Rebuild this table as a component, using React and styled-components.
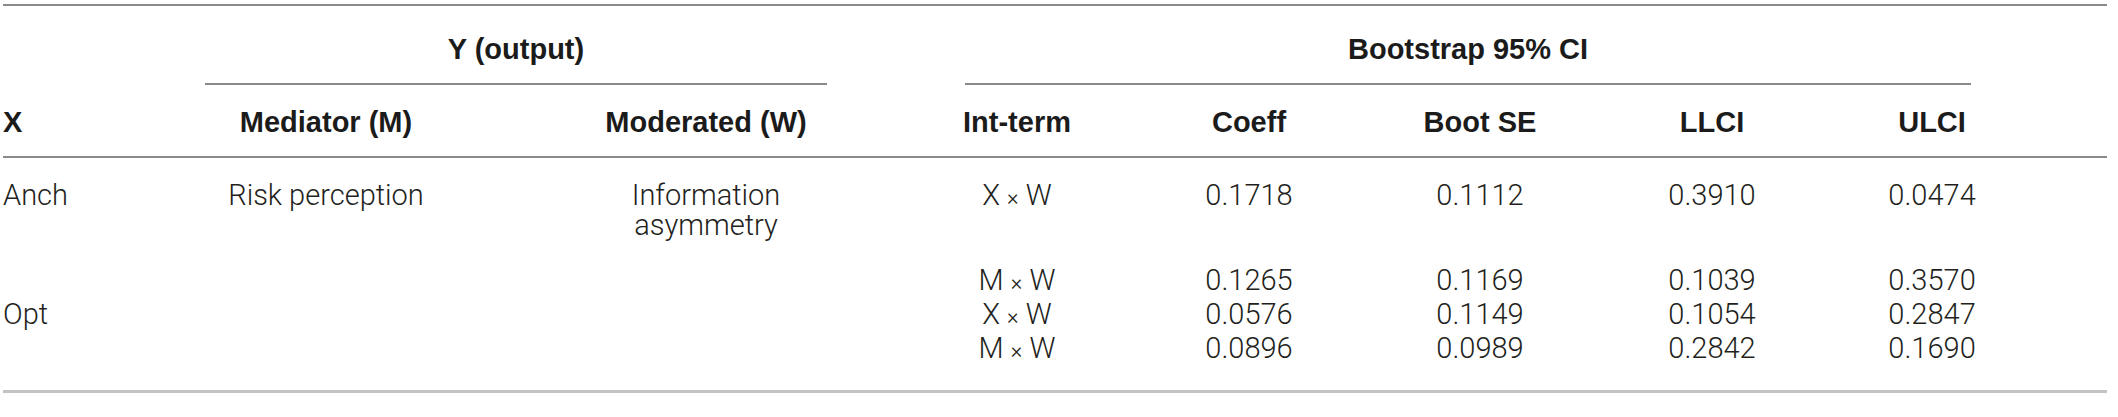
import React from 'react';
import styled, { createGlobalStyle } from 'styled-components';

const GlobalStyle = createGlobalStyle`
  html, body {
    margin: 0;
    padding: 0;
    background: #ffffff;
  }
  body {
    font-family: Roboto, "Liberation Sans", Arial, sans-serif;
    color: #231f20;
  }
`;

const columns = [133, 380, 380, 242, 222, 240, 224, 216, 67];

const rows = [
  { x: 'Anch', m: 'Risk perception', w: 'Information asymmetry', term: 'X', values: ['0.1718', '0.1112', '0.3910', '0.0474'] },
  { x: '', m: '', w: '', term: 'M', values: ['0.1265', '0.1169', '0.1039', '0.3570'] },
  { x: 'Opt', m: '', w: '', term: 'X', values: ['0.0576', '0.1149', '0.1054', '0.2847'] },
  { x: '', m: '', w: '', term: 'M', values: ['0.0896', '0.0989', '0.2842', '0.1690'] }
];

export default function App() {
  return (
    <>
      <GlobalStyle />
      <StPage>
        <StTable>
          <colgroup>
            {columns.map((w, i) => (
              <col key={i} style={{ width: `${w}px` }} />
            ))}
          </colgroup>
          <thead>
            <StGroupRow>
              <StHead />
              <StHead colSpan={2} $center>
                <StSpanner>Y (output)</StSpanner>
              </StHead>
              <StHead colSpan={5} $center>
                <StSpanner>Bootstrap 95% CI</StSpanner>
              </StHead>
              <StHead />
            </StGroupRow>
            <StLabelRow>
              <StHead>X</StHead>
              <StHead $center>Mediator (M)</StHead>
              <StHead $center>Moderated (W)</StHead>
              <StHead $center>Int-term</StHead>
              <StHead $center>Coeff</StHead>
              <StHead $center>Boot SE</StHead>
              <StHead $center>LLCI</StHead>
              <StHead $center>ULCI</StHead>
              <StHead />
            </StLabelRow>
          </thead>
          <tbody>
            {rows.map((row, i) => (
              <StRow key={i} $first={i === 0} $last={i === rows.length - 1}>
                <StCell>{row.x}</StCell>
                <StCell $center>{row.m}</StCell>
                <StCell $center>
                  <StWrap>{row.w}</StWrap>
                </StCell>
                <StCell $center>
                  {row.term} <StTimes>×</StTimes> W
                </StCell>
                {row.values.map((v, j) => (
                  <StCell key={j} $center>
                    {v}
                  </StCell>
                ))}
                <StCell />
              </StRow>
            ))}
          </tbody>
        </StTable>
      </StPage>
    </>
  );
}

const StPage = styled.div`
  padding: 4px 0 0 3px;
`;

const StTable = styled.table`
  width: 2104px;
  table-layout: fixed;
  border-collapse: collapse;
  border-top: 2px solid #8a8a8a;
  border-bottom: 3px solid #c4c4c4;
  font-size: 29px;
  line-height: 30px;
`;

const StHead = styled.th`
  font-family: "Liberation Sans", Arial, sans-serif;
  font-size: 29px;
  font-weight: 700;
  color: #1b1b1b;
  text-align: ${(p) => (p.$center ? 'center' : 'left')};
  vertical-align: top;
  padding: 0;
  white-space: nowrap;
`;

const StGroupRow = styled.tr`
  & > th {
    padding-top: 28px;
  }
`;

const StSpanner = styled.div`
  margin: 0 69px;
  padding-bottom: 19px;
  border-bottom: 2px solid #8a8a8a;
`;

const StLabelRow = styled.tr`
  border-bottom: 2px solid #8a8a8a;

  & > th {
    padding-top: 22px;
    padding-bottom: 19px;
  }
`;

const StRow = styled.tr`
  & > td {
    padding-top: ${(p) => (p.$first ? '22px' : '1px')};
    padding-bottom: ${(p) => (p.$first ? '24px' : p.$last ? '24px' : '0')};
  }
`;

const StCell = styled.td`
  font-weight: 300;
  text-align: ${(p) => (p.$center ? 'center' : 'left')};
  vertical-align: top;
  padding-left: 0;
  padding-right: 0;
  white-space: nowrap;
`;

const StWrap = styled.span`
  display: inline-block;
  max-width: 240px;
  white-space: normal;
`;

const StTimes = styled.span`
  font-size: 22px;
`;
